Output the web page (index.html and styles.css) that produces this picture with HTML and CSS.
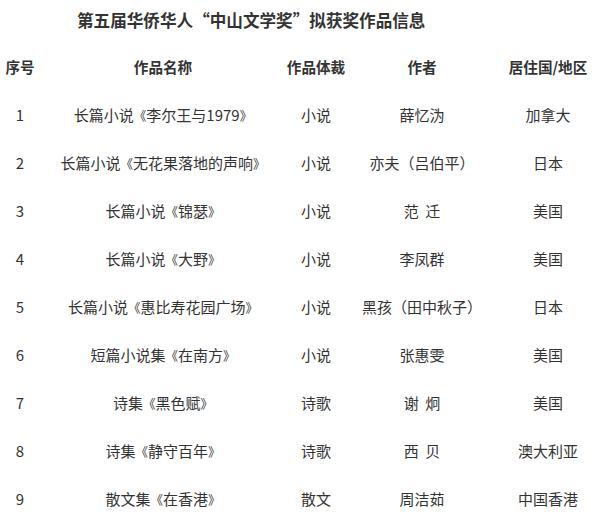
FILE: index.html
```html
<!DOCTYPE html>
<html lang="zh-CN">
<head>
<meta charset="utf-8">
<title>第五届华侨华人“中山文学奖”拟获奖作品信息</title>
<link rel="stylesheet" href="styles.css">
</head>
<body>
<div class="page">
  <h1 class="title">第五届华侨华人“中山文学奖”拟获奖作品信息</h1>
  <div class="table">
    <div class="row head">
      <div class="cell">序号</div>
      <div class="cell">作品名称</div>
      <div class="cell">作品体裁</div>
      <div class="cell">作者</div>
      <div class="cell">居住国/地区</div>
    </div>
    <div class="row">
      <div class="cell">1</div>
      <div class="cell">长篇小说<span class="bk">《</span>李尔王与1979<span class="bk">》</span></div>
      <div class="cell">小说</div>
      <div class="cell">薛忆沩</div>
      <div class="cell">加拿大</div>
    </div>
    <div class="row">
      <div class="cell">2</div>
      <div class="cell">长篇小说<span class="bk">《</span>无花果落地的声响<span class="bk">》</span></div>
      <div class="cell">小说</div>
      <div class="cell">亦夫（吕伯平）</div>
      <div class="cell">日本</div>
    </div>
    <div class="row">
      <div class="cell">3</div>
      <div class="cell">长篇小说<span class="bk">《</span>锦瑟<span class="bk">》</span></div>
      <div class="cell">小说</div>
      <div class="cell">范&nbsp;&nbsp;迁</div>
      <div class="cell">美国</div>
    </div>
    <div class="row">
      <div class="cell">4</div>
      <div class="cell">长篇小说<span class="bk">《</span>大野<span class="bk">》</span></div>
      <div class="cell">小说</div>
      <div class="cell">李凤群</div>
      <div class="cell">美国</div>
    </div>
    <div class="row">
      <div class="cell">5</div>
      <div class="cell">长篇小说<span class="bk">《</span>惠比寿花园广场<span class="bk">》</span></div>
      <div class="cell">小说</div>
      <div class="cell">黑孩（田中秋子）</div>
      <div class="cell">日本</div>
    </div>
    <div class="row">
      <div class="cell">6</div>
      <div class="cell">短篇小说集<span class="bk">《</span>在南方<span class="bk">》</span></div>
      <div class="cell">小说</div>
      <div class="cell">张惠雯</div>
      <div class="cell">美国</div>
    </div>
    <div class="row">
      <div class="cell">7</div>
      <div class="cell">诗集<span class="bk">《</span>黑色赋<span class="bk">》</span></div>
      <div class="cell">诗歌</div>
      <div class="cell">谢&nbsp;&nbsp;炯</div>
      <div class="cell">美国</div>
    </div>
    <div class="row">
      <div class="cell">8</div>
      <div class="cell">诗集<span class="bk">《</span>静守百年<span class="bk">》</span></div>
      <div class="cell">诗歌</div>
      <div class="cell">西&nbsp;&nbsp;贝</div>
      <div class="cell">澳大利亚</div>
    </div>
    <div class="row">
      <div class="cell">9</div>
      <div class="cell">散文集<span class="bk">《</span>在香港<span class="bk">》</span></div>
      <div class="cell">散文</div>
      <div class="cell">周洁茹</div>
      <div class="cell">中国香港</div>
    </div>
  </div>
</div>
</body>
</html>
```
FILE: styles.css
```css
html, body {
  margin: 0;
  padding: 0;
  background: #ffffff;
}
body {
  font-family: "Noto Sans CJK SC", "Noto Sans", sans-serif;
  color: #333333;
  font-size: 15px;
}
.page {
  width: 600px;
}
.title {
  margin: 0 0 3px 0;
  padding-left: 77px;
  height: 40px;
  line-height: 40px;
  font-size: 16.6px;
  font-weight: bold;
  color: #333333;
  white-space: nowrap;
}
.table {
  display: flex;
  flex-direction: column;
}
.row {
  display: grid;
  grid-template-columns: 40px 246px 60px 152px 100px;
  height: 48px;
  align-items: center;
}
.cell {
  display: flex;
  justify-content: center;
  align-items: baseline;
  white-space: nowrap;
  line-height: 20px;
}
.head .cell {
  font-weight: bold;
  font-size: 14.6px;
}
.bk {
  font-size: 12.5px;
}
```
